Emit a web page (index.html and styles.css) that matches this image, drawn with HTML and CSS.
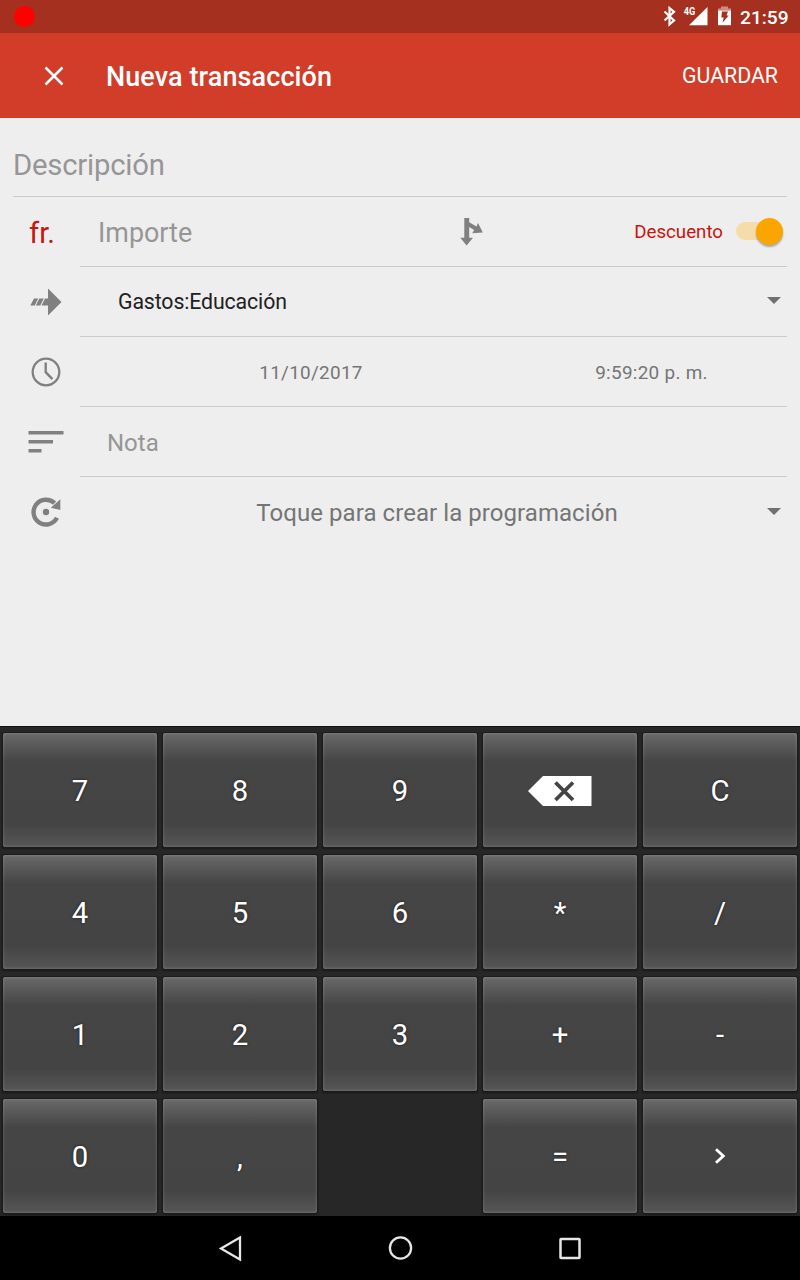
FILE: index.html
```html
<!DOCTYPE html>
<html lang="es">
<head>
<meta charset="utf-8">
<title>Nueva transacción</title>
<link rel="stylesheet" href="styles.css">
</head>
<body>
<div class="screen">
  <header class="status">
    <span class="rec"></span>
    <svg class="status-icons" viewBox="660 0 76 33" width="76" height="33">
      <path d="M664.500 11.500 L674 20.500 L669.500 24.300 V8 L674 11.800 L664.500 20.500" fill="none" stroke="#fff" stroke-width="2.200"/>
      <text x="683.800" y="15.300" class="net" textLength="11.500" lengthAdjust="spacingAndGlyphs">4G</text>
      <path d="M707.500 7 V25.300 H689 Z" fill="#fff"/>
      <path d="M721 6.500h7v2h3v2h-13v-2h3z" fill="#fff" opacity=".45"/>
      <path d="M718 10.500h13v14.700h-13z" fill="#fff"/>
      <path d="M722 11.500h6l-1.500 4h2.200l-6.200 7.300 1.200-5.300h-2.400z" fill="#a53020"/>
    </svg>
    <span class="clock">21:59</span>
  </header>
  <div class="appbar">
    <svg class="close" viewBox="0 0 20 20" width="20" height="20"><path d="M1.500 1.500l17 17M18.500 1.500L1.500 18.500" stroke="#fff" stroke-width="2.500"/></svg>
    <h1 class="title">Nueva transacción</h1>
    <span class="save">GUARDAR</span>
  </div>
  <main class="form">
    <div class="desc"><span>Descripción</span></div>
    <div class="row">
      <div class="lead currency">fr.</div>
      <div class="cell amount">
        <span class="amount-hint">Importe</span>
        <svg class="split" viewBox="0 0 24 30" width="24" height="30"><path d="M4.300 1h4.900v4.200l7.300 4.300 1.500-3.400 4.800 9.400-10.600.800 1.900-3.300-4.900-3v10.700h3.800l-6.400 7.800-6.300-7.800h4z" fill="#808080"/></svg>
        <span class="type">Descuento</span>
        <span class="switch"><span class="thumb"></span></span>
      </div>
    </div>
    <div class="row">
      <div class="lead"><svg viewBox="0 0 32 28" width="32" height="28"><path d="M18 .500L31.500 14 18 27.500V17.500h-6.500L15 10.500h3z M4 10.500h4.200L4.700 17.500H.300z M9.300 10.500h4.500L10.300 17.500H5.800z" fill="#808080"/></svg></div>
      <div class="cell account"><span>Gastos:Educación</span><i class="caret"></i></div>
    </div>
    <div class="row">
      <div class="lead"><svg viewBox="0 0 30 30" width="30" height="30"><circle cx="15" cy="15" r="13.300" fill="none" stroke="#808080" stroke-width="2.300"/><path d="M14.700 5.500v9.700l6.700 7" fill="none" stroke="#808080" stroke-width="2.400"/></svg></div>
      <div class="cell when"><span class="date">11/10/2017</span><span class="time">9:59:20 p. m.</span></div>
    </div>
    <div class="row">
      <div class="lead"><svg viewBox="0 0 36 24" width="36" height="24"><path d="M.500 1h35v3.500h-35z M.500 10h24.500v3.500h-24.500z M.500 19h13v3.500h-13z" fill="#808080"/></svg></div>
      <div class="cell note">Nota</div>
    </div>
    <div class="row last">
      <div class="lead"><svg viewBox="0 0 30 30" width="30" height="30"><path d="M26 20.800A12.400 12.400 0 1 1 23.600 6.200" fill="none" stroke="#808080" stroke-width="4.400"/><path d="M29.300 2.300v10.700l-9.500-2.300z" fill="#808080"/><circle cx="15" cy="15" r="3.200" fill="#808080"/></svg></div>
      <div class="cell schedule"><span>Toque para crear la programación</span><i class="caret"></i></div>
    </div>
  </main>
  <section class="keypad">
    <div class="key">7</div><div class="key">8</div><div class="key">9</div>
    <div class="key"><svg viewBox="0 0 64 30" width="64" height="30"><path d="M0 15L15 0h48.500v30H15z" fill="#fff"/><path d="M27.500 6.500l17.500 17.500M45 6.500l-17.500 17.500" stroke="#444" stroke-width="3.800"/></svg></div>
    <div class="key">C</div>
    <div class="key">4</div><div class="key">5</div><div class="key">6</div><div class="key">*</div><div class="key">/</div>
    <div class="key">1</div><div class="key">2</div><div class="key">3</div><div class="key">+</div><div class="key">-</div>
    <div class="key">0</div><div class="key">,</div><div class="gap"></div><div class="key">=</div>
    <div class="key"><svg viewBox="0 0 12 16" width="12" height="16"><path d="M2 .200l7.300 6.800-7.300 6.800" fill="none" stroke="#fff" stroke-width="2.800"/></svg></div>
  </section>
  <nav class="nav">
    <svg viewBox="0 0 24 26" width="24" height="26"><path d="M22 2.500v22L3 13.500z" fill="none" stroke="#e6e6e6" stroke-width="2.300"/></svg>
    <svg viewBox="0 0 24 24" width="24" height="24"><circle cx="12.500" cy="12" r="10.600" fill="none" stroke="#e6e6e6" stroke-width="2.300"/></svg>
    <svg viewBox="0 0 24 24" width="24" height="24"><rect x="2.500" y="3" width="19" height="19" rx=".5" fill="none" stroke="#e6e6e6" stroke-width="2.500"/></svg>
  </nav>
</div>
</body>
</html>
```
FILE: styles.css
```css
* { box-sizing: border-box; }
body { margin: 0; font-family: Roboto, sans-serif; background: #eee; }
svg { display: block; flex: none; overflow: visible; }
.screen { width: 800px; height: 1280px; display: flex; flex-direction: column; overflow: hidden; }

.status { height: 33px; background: #a53020; display: flex; align-items: center; padding: 0 11px 0 14px; color: #fff; }
.rec { width: 21px; height: 21px; border-radius: 50%; background: #f00; }
.status-icons { margin-left: auto; }
.net { font-size: 11.500px; font-weight: 700; fill: #fff; }
.clock { width: 53px; padding-left: 4px; padding-top: 1px; font-size: 19.200px; font-weight: 500; white-space: nowrap; }

.appbar { height: 85px; background: #d13d29; color: #fff; display: flex; align-items: center; padding: 0 22px 0 44px; }
.title { margin: 2px 0 0 42px; font-size: 27px; font-weight: 500; line-height: 32px; letter-spacing: .1px; }
.save { margin-left: auto; font-size: 21.300px; }

.form { height: 608px; padding: 0 13px; background: #eee; }
.desc { height: 79px; padding-top: 15px; line-height: 64px; border-bottom: 1px solid #cbcbcb; font-size: 29.300px; letter-spacing: -.22px; color: #969696; }
.row { height: 70px; display: flex; }
.lead { width: 67px; height: 69px; padding-right: 1px; display: flex; align-items: center; justify-content: center; }
.currency { justify-content: flex-start; padding: 3px 0 0 16px; font-size: 29.300px; color: #c7160f; }
.cell { flex: 1; display: flex; align-items: center; border-bottom: 1px solid #cbcbcb; white-space: nowrap; }
.last .cell { border-color: transparent; }
.amount { padding: 0 4px 0 18px; }
.amount-hint { width: 362px; padding-top: 2px; font-size: 26.900px; color: #969696; }
.type { margin-left: auto; font-size: 18.700px; color: #c7160f; }
.switch { width: 47px; height: 18px; margin: 0 0 1px 13px; border-radius: 9px; background: #f5dca9; display: flex; align-items: center; justify-content: flex-end; }
.thumb { width: 27px; height: 27px; border-radius: 50%; background: #fba600; box-shadow: 0 2px 2px rgba(0,0,0,.3); }
.account { padding: 0 6px 0 38px; justify-content: space-between; font-size: 21.300px; letter-spacing: -.12px; color: #212121; }
.caret { border: 7px solid transparent; border-top-color: #707070; border-bottom: 0; margin-top: -2px; flex: none; }
.when { padding-top: 1px; font-size: 18.900px; letter-spacing: .3px; color: #757575; text-align: center; }
.date { width: 462px; }
.time { width: 219px; }
.note { padding: 2px 0 0 27px; font-size: 24px; color: #969696; }
.schedule { padding: 0 6px 0 27px; font-size: 24px; letter-spacing: .06px; color: #757575; }
.schedule span { flex: 1; text-align: center; padding-top: 2px; }
.schedule .caret { margin-top: 0; }

.keypad { height: 490px; background: #272727; border-top: 1px solid #111; padding: 6px 3px 3px; display: grid; grid-template-columns: repeat(5, 154px); grid-auto-rows: 114px; gap: 8px 6px; }
.key {
  display: flex; align-items: center; justify-content: center;
  border-radius: 2px; color: #fff; font-size: 29.300px; padding-top: 2px;
  text-shadow: 0 0 3px rgba(0,0,0,.6);
  background: linear-gradient(#696969, #454545 25%, #444 80%, #565656);
  box-shadow: 0 0 0 1px #1b1b1b, 0 1px 2px 1px #181818, inset 0 0 3px rgba(255,255,255,.25);
}
.nav { height: 64px; background: #000; display: flex; align-items: center; justify-content: center; gap: 146px; }
```
